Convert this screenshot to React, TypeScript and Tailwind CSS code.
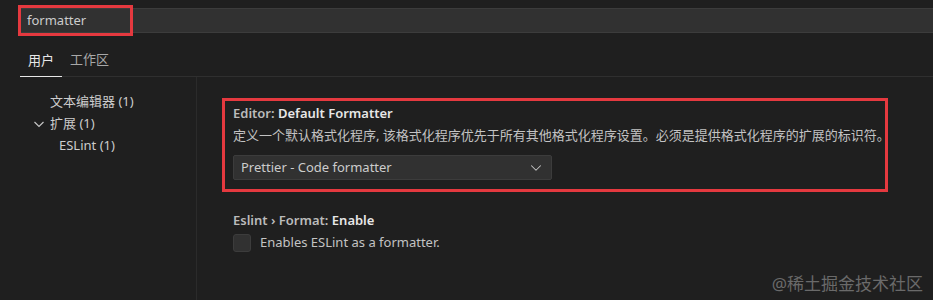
import { ChevronDown } from "lucide-react";

const font = { fontFamily: '"Noto Sans", "Noto Sans CJK SC", sans-serif' };

function TreeItem({ label, indent, open }: { label: string; indent: string; open?: boolean }) {
  return (
    <div className={`flex items-center h-[22px] ${indent}`}>
      {open && (
        <svg width="12" height="12" viewBox="0 0 12 12" className="mr-[5px] text-[#c5c5c5]">
          <path d="M1.5 4 L6 8.5 L10.5 4" fill="none" stroke="currentColor" strokeWidth="1.2" />
        </svg>
      )}
      <span>{label}</span>
    </div>
  );
}

export default function App() {
  return (
    <div style={font} className="relative w-[933px] h-[300px] overflow-hidden bg-[#1f1f1f] text-[13px] text-[#cccccc]">
      {/* search */}
      <div className="pt-[8px] pl-[20px]">
        <div className="relative h-[25px] bg-[#313131] border-y border-[#3c3c3c] flex items-center pl-[7px] text-[#cccccc]">
          formatter
          <div className="absolute left-[-2px] top-[-4px] w-[115px] h-[31px] border-[3px] border-[#e5393f]" />
        </div>
      </div>

      {/* tabs */}
      <div className="mt-[11px] ml-[20px] flex h-[33px] border-b border-[#2f2f2f] items-center">
        <div className="h-full w-[42px] flex items-center justify-center border-b border-[#e7e7e7] text-[#e7e7e7] translate-y-[1px]">用户</div>
        <div className="ml-[8px] text-[#a8a8a8]">工作区</div>
      </div>

      <div className="flex">
        {/* tree */}
        <div className="w-[197px] pt-[14px] border-r border-[#2b2b2b] h-[230px]">
          <TreeItem label="文本编辑器 (1)" indent="pl-[50px]" />
          <TreeItem label="扩展 (1)" indent="pl-[33px]" open />
          <TreeItem label="ESLint (1)" indent="pl-[59px]" />
        </div>

        {/* settings */}
        <div className="pl-[25px] pt-[21px] flex flex-col">
          <div className="w-[666px] h-[94px] border-[3px] border-[#e5393f] pl-[8px] pt-[3px]">
            <div className="h-[19px] font-semibold">
              <span className="text-[#bbbbbb]">Editor: </span>
              <span className="text-[#e7e7e7]">Default Formatter</span>
            </div>
            <div className="mt-[3px] h-[20px] text-[#c3c3c3] whitespace-nowrap">
              定义一个默认格式化程序, 该格式化程序优先于所有其他格式化程序设置。必须是提供格式化程序的扩展的标识符。
            </div>
            <div className="mt-[9px] w-[319px] h-[25px] bg-[#313131] border border-[#3c3c3c] rounded-[2px] flex items-center justify-between pl-[7px] pr-[3px]">
              <span>Prettier - Code formatter</span>
              <ChevronDown size={18} strokeWidth={1.4} className="text-[#c5c5c5] mr-[3px]" />
            </div>
          </div>

          <div className="mt-[19px] pl-[11px]">
            <div className="h-[19px] font-semibold">
              <span className="text-[#bbbbbb]">Eslint › Format: </span>
              <span className="text-[#e7e7e7]">Enable</span>
            </div>
            <div className="mt-[3px] flex items-center">
              <div className="w-[18px] h-[18px] rounded-[3px] bg-[#313131] border border-[#3c3c3c]" />
              <span className="ml-[9px] text-[#c3c3c3]">Enables ESLint as a formatter.</span>
            </div>
          </div>
        </div>
      </div>

      <div className="absolute right-[10px] bottom-[4px] text-[17px] text-[#6a6a6a]">@稀土掘金技术社区</div>
    </div>
  );
}
